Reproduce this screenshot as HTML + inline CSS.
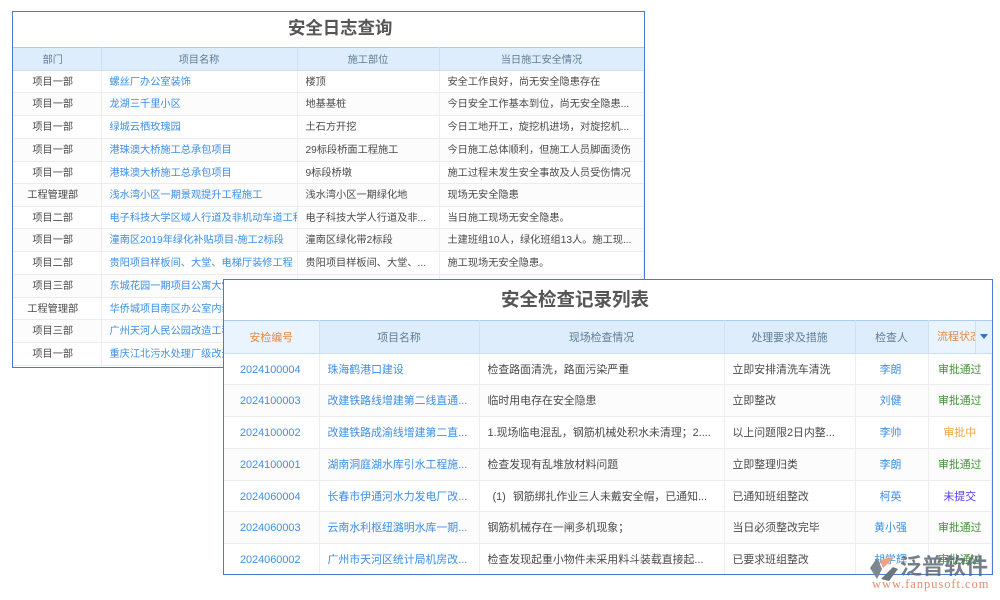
<!DOCTYPE html>
<html lang="zh"><head><meta charset="utf-8"><title>安全日志查询</title>
<style>
html,body{margin:0;padding:0;background:#fff;width:1000px;height:600px;overflow:hidden}
body{position:relative;font-family:"Liberation Sans","Noto Sans CJK SC",sans-serif;color:#444}
.panel{position:absolute;box-sizing:border-box;background:#fff;border:1px solid #4a78d6;overflow:hidden}
.title{position:absolute;font-weight:700;color:#555;white-space:nowrap}
table{position:absolute;left:0;border-collapse:collapse;table-layout:fixed}
th{background:#deedfb;font-weight:400;color:#5d7d98;border-right:1px solid #cfe0f0;border-bottom:1px solid #c9def2;padding:0;text-align:center;line-height:14px;vertical-align:top}
td{border-right:1px solid #eeeeee;border-bottom:1px solid #ececec;padding:0 8px;white-space:nowrap;overflow:hidden;color:#4a4a4a;line-height:14px;vertical-align:top}
tbody tr:nth-child(even) td{background:#fcfcfc}
td.c{text-align:center;padding:0}
td.l,.n{color:#3c8ee8}
#p1{left:12px;top:11px;width:633px;height:357px}
#p1 .title{left:275px;top:4px;font-size:17.4px;line-height:24px}
#p1 table{top:35px;width:631px;font-size:10.2px;border-top:1px solid #a9cdf0}
#p1 thead tr{height:23px}
#p1 tbody tr{height:23px}
#p1 tbody tr.s{height:22px}
#p1 th{padding-top:6px}
#p1 td,#p1 td.c{padding-top:5px}
#p1 th.d,#p1 td.c{padding-right:8px}
#p1 td.l{padding-left:8px}
#p2{left:223px;top:279px;width:770px;height:296px}
#p2 .title{left:277px;top:7px;font-size:18.5px;line-height:26px}
#p2 table{top:40px;width:768px;font-size:10.9px;border-top:1px solid #a9cdf0}
#p2 thead tr{height:33px}
#p2 tbody tr{height:32px}
#p2 tbody tr.s{height:31px}
#p2 th{padding-top:10px}
#p2 td,#p2 td.c{padding-top:9px}
#p2 td.l{padding-left:8px}
#p2 td.m{padding-left:8px;padding-right:0}
#p2 td.n.c{padding-right:2px}
th.o{color:#e48a42;background:#e9f4fe}
.g{color:#3f9232!important}.y{color:#f4a53a!important}.v{color:#5538ee!important}
.arrow{position:absolute;left:751px;top:41px;width:16px;height:32px;background:#e6f2fd;border-left:1px solid #cfe0f0;box-sizing:border-box}
.arrow i{position:absolute;left:4px;top:13px;width:0;height:0;border-left:4px solid transparent;border-right:4px solid transparent;border-top:5px solid #2f76c6}
.st{position:absolute;left:713px;top:41px;width:38px;height:32px;color:#e48a42;font-size:11px;line-height:32px;text-align:left;overflow:hidden;white-space:nowrap}
.wm{position:absolute;left:870px;top:552px;width:130px;height:48px;pointer-events:none}
.wm .a{position:absolute;left:30px;top:2px;font-size:22px;line-height:26px;color:#5d6975;opacity:.85;font-weight:700;white-space:nowrap}
.wm .b{position:absolute;left:2px;top:25px;font-family:"Liberation Serif",serif;font-size:12.5px;line-height:14px;letter-spacing:.95px;color:#e58c6a;white-space:nowrap}
.wm svg{position:absolute;left:0;top:5px}
</style></head><body>
<div class="panel" id="p1">
<div class="title">安全日志查询</div>
<table><colgroup><col style="width:88px"><col style="width:196px"><col style="width:142px"><col></colgroup>
<thead><tr><th class="d">部门</th><th>项目名称</th><th>施工部位</th><th style="border-right:0">当日施工安全情况</th></tr></thead>
<tbody>
<tr class="s"><td class="c">项目一部</td><td class="l">螺丝厂办公室装饰</td><td>楼顶</td><td>安全工作良好，尚无安全隐患存在</td></tr>
<tr><td class="c">项目一部</td><td class="l">龙湖三千里小区</td><td>地基基桩</td><td>今日安全工作基本到位，尚无安全隐患...</td></tr>
<tr><td class="c">项目一部</td><td class="l">绿城云栖玫瑰园</td><td>土石方开挖</td><td>今日工地开工，旋挖机进场，对旋挖机...</td></tr>
<tr><td class="c">项目一部</td><td class="l">港珠澳大桥施工总承包项目</td><td>29标段桥面工程施工</td><td>今日施工总体顺利，但施工人员脚面烫伤</td></tr>
<tr class="s"><td class="c">项目一部</td><td class="l">港珠澳大桥施工总承包项目</td><td>9标段桥墩</td><td>施工过程未发生安全事故及人员受伤情况</td></tr>
<tr><td class="c">工程管理部</td><td class="l">浅水湾小区一期景观提升工程施工</td><td>浅水湾小区一期绿化地</td><td>现场无安全隐患</td></tr>
<tr class="s"><td class="c">项目二部</td><td class="l">电子科技大学区域人行道及非机动车道工程</td><td>电子科技大学人行道及非...</td><td>当日施工现场无安全隐患。</td></tr>
<tr><td class="c">项目一部</td><td class="l">潼南区2019年绿化补贴项目-施工2标段</td><td>潼南区绿化带2标段</td><td>土建班组10人，绿化班组13人。施工现...</td></tr>
<tr><td class="c">项目二部</td><td class="l">贵阳项目样板间、大堂、电梯厅装修工程</td><td>贵阳项目样板间、大堂、...</td><td>施工现场无安全隐患。</td></tr>
<tr><td class="c">项目三部</td><td class="l">东城花园一期项目公寓大堂</td><td></td><td></td></tr>
<tr class="s"><td class="c">工程管理部</td><td class="l">华侨城项目南区办公室内装</td><td></td><td></td></tr>
<tr><td class="c">项目三部</td><td class="l">广州天河人民公园改造工程</td><td></td><td></td></tr>
<tr><td class="c">项目一部</td><td class="l">重庆江北污水处理厂级改造</td><td></td><td></td></tr>
</tbody></table>
</div>
<div class="panel" id="p2">
<div class="title">安全检查记录列表</div>
<table><colgroup><col style="width:95px"><col style="width:160px"><col style="width:245px"><col style="width:131px"><col style="width:73px"><col></colgroup>
<thead><tr><th class="o">安检编号</th><th>项目名称</th><th>现场检查情况</th><th>处理要求及措施</th><th>检查人</th><th class="o" style="border-right:0"></th></tr></thead>
<tbody>
<tr class="s"><td class="c n">2024100004</td><td class="l">珠海鹤港口建设</td><td class="m">检查路面清洗，路面污染严重</td><td class="m">立即安排清洗车清洗</td><td class="c n">李朗</td><td class="c g">审批通过</td></tr>
<tr><td class="c n">2024100003</td><td class="l">改建铁路线增建第二线直通...</td><td class="m">临时用电存在安全隐患</td><td class="m">立即整改</td><td class="c n">刘健</td><td class="c g">审批通过</td></tr>
<tr><td class="c n">2024100002</td><td class="l">改建铁路成渝线增建第二直...</td><td class="m">1.现场临电混乱，钢筋机械处积水未清理；2....</td><td class="m">以上问题限2日内整...</td><td class="c n">李帅</td><td class="c y">审批中</td></tr>
<tr><td class="c n">2024100001</td><td class="l">湖南洞庭湖水库引水工程施...</td><td class="m">检查发现有乱堆放材料问题</td><td class="m">立即整理归类</td><td class="c n">李朗</td><td class="c g">审批通过</td></tr>
<tr class="s"><td class="c n">2024060004</td><td class="l">长春市伊通河水力发电厂改...</td><td class="m" style="padding-left:13px">(1)<span style="display:inline-block;width:7px"></span>钢筋绑扎作业三人未戴安全帽，已通知...</td><td class="m">已通知班组整改</td><td class="c n">柯英</td><td class="c v">未提交</td></tr>
<tr><td class="c n">2024060003</td><td class="l">云南水利枢纽潞明水库一期...</td><td class="m">钢筋机械存在一闸多机现象；</td><td class="m">当日必须整改完毕</td><td class="c n">黄小强</td><td class="c g">审批通过</td></tr>
<tr><td class="c n">2024060002</td><td class="l">广州市天河区统计局机房改...</td><td class="m">检查发现起重小物件未采用料斗装载直接起...</td><td class="m">已要求班组整改</td><td class="c n">胡学辉</td><td class="c g">审批通过</td></tr>
</tbody></table>
<div class="st">流程状态</div>
<div class="arrow"><i></i></div>
</div>
<div class="wm">
<svg width="30" height="24" viewBox="0 0 30 24"><path d="M7 1 L0 11 L7 22 L12 12 Z" fill="#7d8791"/><path d="M10 4 Q15 0 24 1 L13 11 Z" fill="#e9a283"/><path d="M11 22 L23 10 L28 12 L19 24 Z" fill="#6a7680"/></svg>
<div class="a">泛普软件</div>
<div class="b">www.fanpusoft.com</div>
</div>
</body></html>
